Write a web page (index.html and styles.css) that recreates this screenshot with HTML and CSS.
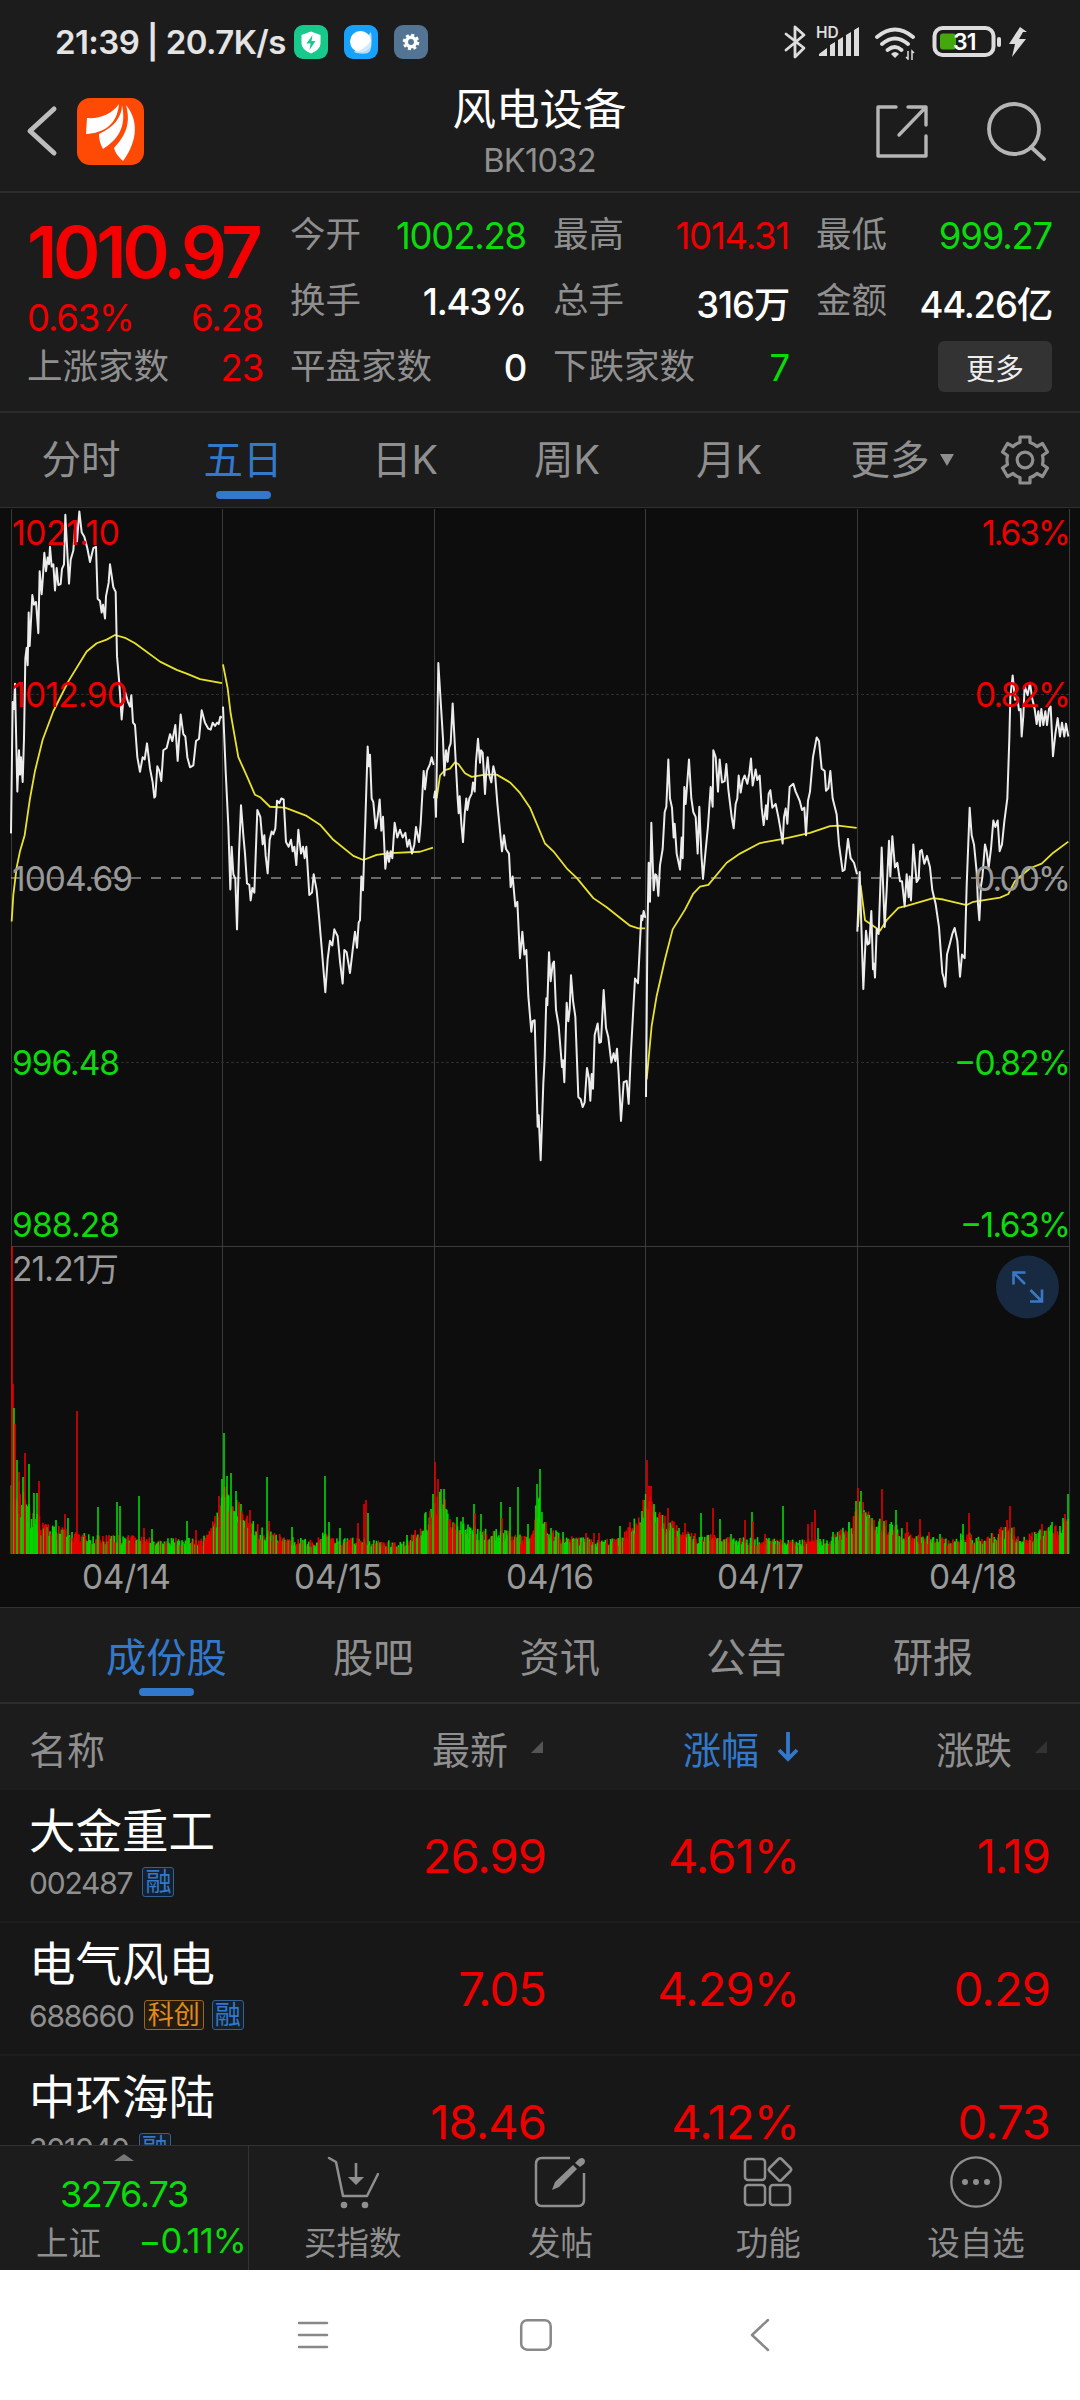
FILE: index.html
```html
<!DOCTYPE html>
<html lang="zh-CN">
<head>
<meta charset="utf-8">
<title>风电设备 BK1032</title>
<link rel="stylesheet" href="styles.css">
</head>
<body>
<div class="phone">

<!-- Status bar -->
<div class="status">
<span class="status-text">21:39 | 20.7K/s</span>
<div class="status-apps">
<svg width="34" height="34" viewBox="0 0 34 34"><rect width="34" height="34" rx="9" fill="#17c98a"/><path d="M17 6.500l9.500 3.500v8c0 5-4 8-9.500 10.500c-5.500-2.500-9.500-5.500-9.500-10.500v-8z" fill="#fff"/><path d="M18.500 10l-6 8.500h4l-1 6.500l6-9h-4z" fill="#17c98a"/></svg>
<svg width="34" height="34" viewBox="0 0 34 34"><rect width="34" height="34" rx="9" fill="#16a2fb"/><path d="M27 7c1 6 1 15-1 19s-12 3-16 1z" fill="#b5dcf9"/><circle cx="16.500" cy="16.500" r="10.500" fill="#fff"/><path d="M27 15c-3 6-8 9-14 11.500c7 2 14-3 14-11.500z" fill="#d3e8fa"/></svg>
<svg width="34" height="34" viewBox="0 0 34 34"><rect width="34" height="34" rx="9" fill="#547493"/><circle cx="17" cy="17" r="4.700" fill="none" stroke="#fff" stroke-width="3.600"/><circle cx="17" cy="17" r="7" fill="none" stroke="#fff" stroke-width="2.600" stroke-dasharray="3 2.500"/></svg>
</div>
<div class="status-right">
<svg width="244" height="36" viewBox="0 0 244 36">
<path d="M2 10l18 14-9 9V3l9 8L2 26" fill="none" stroke="#ddd" stroke-width="2.800" stroke-linejoin="round" stroke-linecap="round"/>
<text x="32" y="14" class="hd">HD</text>
<g fill="#ddd"><path d="M35 32v-2l8-6v8zM46 32V21l5-3v14zM54 32V16l5-3v19zM62 32V11l5-3v24zM70 32V6l5-3v29z"/></g>
<g fill="none" stroke="#ddd" stroke-width="3.800" stroke-linecap="round"><path d="M93 13q18-15 36 0M98 20q13-11 26 0M103.500 26q7.500-6 14 0"/></g>
<path d="M107 30q4-4 8 0l-4 4z" fill="#ddd"/>
<path d="M124 27v8l-2-2M128 36v-9l2 2" fill="none" stroke="#ddd" stroke-width="1.500"/>
<rect x="150.500" y="4" width="59" height="27" rx="8" fill="none" stroke="#ddd" stroke-width="4"/>
<rect x="156" y="9.500" width="16" height="16" rx="3" fill="#44a80c"/>
<rect x="213" y="13" width="4" height="10" rx="2" fill="#ddd"/>
<text x="169" y="26" class="battery">31</text>
<path d="M236 3l-11 17h6l-3 13 14-18h-7l4-7h4z" fill="#ddd"/>
</svg>
</div>
</div>

<!-- Title bar -->
<div class="titlebar">
<svg class="back" width="32" height="52" viewBox="0 0 32 52"><path d="M28 4L4 26l24 22" fill="none" stroke="#bdbdbd" stroke-width="5" stroke-linecap="round" stroke-linejoin="round"/></svg>
<svg class="logo" width="67" height="67" viewBox="0 0 67 67"><rect width="67" height="67" rx="13" fill="#ff4a06"/><g fill="#fff"><path d="M42 6C35 16 23 21 10 20L9 36C27 35 40 27 42 6z"/><path d="M45 7c0 12-8 22-23 29c0 5 1 10 4 15c14-9 24-21 19-44z"/><path d="M49 7c5 18 0 30-12 43c1 4 4 9 9 13c12-16 18-38 3-56z"/></g></svg>
<div class="title">
<div class="title-name">风电设备</div>
<div class="title-code">BK1032</div>
</div>
<div class="title-icons">
<svg width="56" height="56" viewBox="0 0 56 56"><g fill="none" stroke="#b5b5b5" stroke-width="3.400" stroke-linecap="round" stroke-linejoin="round"><path d="M22 4H4v49h48V33M34 4h18v18M52 4L25 32"/></g></svg>
<svg width="60" height="60" viewBox="0 0 60 60"><g fill="none" stroke="#b5b5b5" stroke-width="3.800" stroke-linecap="round"><circle cx="27" cy="28" r="25"/><path d="M44 46l13 12"/></g></svg>
</div>
</div>

<!-- Quote -->
<div class="quote">
<div class="quote-main">
<div class="price up">1010.97</div>
<div class="cell change up"><span>0.63%</span><span>6.28</span></div>
<div class="cell"><label>上涨家数</label><span class="up">23</span></div>
</div>
<div class="quote-col">
<div class="cell"><label>今开</label><span class="down">1002.28</span></div>
<div class="cell"><label>换手</label><b>1.43%</b></div>
<div class="cell"><label>平盘家数</label><b>0</b></div>
</div>
<div class="quote-col">
<div class="cell"><label>最高</label><span class="up">1014.31</span></div>
<div class="cell"><label>总手</label><b>316万</b></div>
<div class="cell"><label>下跌家数</label><span class="down">7</span></div>
</div>
<div class="quote-col">
<div class="cell"><label>最低</label><span class="down">999.27</span></div>
<div class="cell"><label>金额</label><b>44.26亿</b></div>
<div class="cell cell-end"><button class="more-btn">更多</button></div>
</div>
</div>

<!-- Period tabs -->
<div class="periods">
<span class="period">分时</span>
<span class="period active">五日</span>
<span class="period">日K</span>
<span class="period">周K</span>
<span class="period">月K</span>
<span class="period period-more">更多<i class="caret"></i></span>
<svg class="gear" width="50" height="50" viewBox="0 0 50 50"><g fill="none" stroke="#8f8f8f" stroke-width="3.200" stroke-linejoin="round"><path d="M20 2h10v5.500q4 1.200 7 4l5.500-3 5 8.500-5 3.500q1 4.500 0 9l5 3.500-5 8.500-5.500-3q-3 3-7 4V48H20v-5.500q-4-1-7-4l-5.500 3-5-8.500 5-3.500q-1-4.500 0-9l-5-3.500 5-8.500 5.500 3q3-3 7-4z"/><circle cx="25" cy="25" r="7.800"/></g></svg>
</div>

<!-- Five day chart -->
<div class="chart">
<svg width="1080" height="1099" viewBox="0 0 1080 1099">
<g class="grid">
<path d="M11.500 1V1046M222.500 1V1046M434.500 1V1046M645.500 1V1046M857.500 1V1046M1069.500 1V1046M11 738.500H1070"/>
<path class="dots" d="M11 186.500H1070M11 554.500H1070"/>
<path class="zero" d="M11 370H1070"/>
</g>
<g id="volume"></g>
<g class="line avg">
<g transform="translate(0 -8) scale(.33333 .4592)">
<polyline points="35,918 40,860 50,800 60,765 74,730 90,650 105,590 128,522 160,460 205,395 260,330 290,312 320,304 345,294 375,300 405,312 480,352 530,370 560,378 600,390 666,399"/>
<polyline points="669,358 683,410 692,465 715,560 740,600 765,642 782,648 810,668 855,670 920,688 960,707 1000,740 1060,775 1090,784 1130,773 1170,769 1260,766 1299,757"/>
</g>
<g transform="translate(430 -8) scale(.33333 .4592)">
<polyline points="20,650 30,600 45,588 60,585 75,571 85,575 105,595 125,603 165,598 200,598 240,615 270,638 300,670 345,748 370,765 410,802 440,823 490,867 530,887 600,927 625,933 645,933"/>
<polyline points="650,1262 665,1145 680,1080 705,1000 728,935 765,892 790,857 810,842 835,838 890,790 930,770 990,747 1060,738 1140,725 1200,710 1225,709 1280,714"/>
</g>
<g transform="translate(700 -8) scale(.33333 .4592)">
<polyline points="474,930 482,840 495,915 515,925 540,938 560,915 595,888 620,884 700,867 730,870 800,882 820,875 900,866 925,858 945,830 990,802 1025,792 1060,768 1105,744"/>
</g>
</g>
<g class="line now">
<g transform="translate(0 -8) scale(.33333 .4592)">
<polyline points="33,726 38,440 42,455 45,400 52,635 57,545 60,598 63,560 68,614 72,520 76,345 80,322 83,360 86,245 89,318 97,207 102,228 108,222 115,290 119,155 125,205 129,165 133,115 138,155 143,125 147,140 150,102 155,145 160,140 165,197 170,148 175,185 182,183 186,150 192,140 196,32 207,182 212,130 220,110 226,50 231,90 238,25 245,70 253,80 262,105 270,135 280,105 288,102 293,215 300,220 305,245 309,228 315,258 318,210 326,180 330,140 340,190 347,200 351,340 358,400 365,478 370,435 376,420 384,440 390,450 394,425 399,485 405,490 412,560 420,592 428,560 434,565 441,530 450,585 458,615 463,648 466,645 472,580 478,590 484,612 490,545 500,540 510,510 517,525 526,490 533,568 542,467 550,510 556,515 562,560 570,582 580,578 588,525 597,520 605,458 615,485 625,498 632,500 638,485 645,492 651,485 656,488 661,472 666,474"/>
<polyline points="669,450 677,590 685,710 691,848 695,755 700,815 706,825 711,935 717,770 723,665 730,730 735,770 741,835 748,838 752,872 757,845 763,855 772,675 781,690 788,750 793,730 797,775 803,813 809,740 815,722 820,728 826,715 831,655 838,660 844,650 851,652 858,745 866,755 873,740 878,765 883,755 889,795 895,718 903,770 909,755 914,780 919,755 928,860 936,855 941,815 950,850 958,915 965,975 976,1072 983,1000 990,960 997,970 1003,935 1013,950 1020,1005 1028,1053 1033,980 1040,985 1050,1030 1058,980 1065,940 1071,975 1076,920 1080,915 1084,820 1089,850 1096,700 1103,537 1107,580 1110,555 1115,650 1120,658 1127,715 1133,690 1139,652 1144,720 1149,690 1156,803 1162,765 1167,788 1172,765 1177,780 1184,703 1192,735 1200,718 1208,735 1216,725 1222,755 1228,740 1236,770 1243,750 1248,712 1257,745 1262,705 1271,590 1275,630 1281,590 1290,575 1295,560 1301,577"/>
</g>
<g transform="translate(430 -8) scale(.33333 .4592)">
<polyline points="12,650 15,635 18,690 25,355 33,450 39,520 43,600 48,545 53,570 57,540 62,530 68,443 75,540 83,650 86,682 89,645 94,705 99,745 104,685 109,650 112,675 118,650 125,640 129,615 134,635 138,570 144,520 150,572 153,545 158,550 165,640 169,590 173,560 178,600 184,615 190,580 195,595 202,660 208,705 216,765 222,730 228,760 237,770 242,843 248,820 256,885 262,875 270,998 277,940 283,990 289,980 295,1080 304,1158 308,1135 314,1133 323,1365 326,1340 332,1438 340,1270 344,1215 349,1085 352,1100 357,985 362,1048 368,1010 372,1005 378,1110 386,1145 396,1235 399,1220 403,1268 410,1095 415,1135 419,1110 423,1035 429,1090 436,1125 445,1300 452,1305 458,1322 464,1312 471,1237 477,1260 481,1308 485,1250 489,1282 494,1165 503,1140 508,1182 513,1180 521,1067 528,1150 535,1170 544,1225 551,1205 556,1222 561,1195 566,1250 573,1352 581,1268 590,1265 596,1315 603,1200 615,1042 624,1052 634,905 637,915 641,895 646,910"/>
<polyline points="648,1300 652,960 656,790 660,875 664,703 671,850 676,815 680,818 685,862 690,795 698,760 704,680 709,668 715,565 720,650 726,670 731,735 734,705 740,770 750,805 755,735 758,780 763,625 767,662 777,565 784,650 790,680 797,690 803,770 808,668 814,770 819,825 826,770 834,710 842,625 848,668 850,545 857,560 864,635 869,565 876,615 884,612 889,575 895,630 900,660 905,690 911,715 917,662 922,650 926,600 932,637 938,610 944,600 952,618 958,595 963,563 968,622 977,587 982,610 989,600 995,670 1001,708 1008,665 1011,695 1016,640 1021,632 1027,670 1037,662 1045,690 1051,715 1058,748 1062,690 1067,672 1072,705 1079,625 1090,618 1097,635 1103,645 1109,655 1116,675 1123,670 1128,730 1134,655 1140,635 1149,560 1160,517 1167,525 1175,585 1184,590 1188,633 1195,628 1201,590 1208,650 1220,685 1227,750 1238,808 1244,805 1254,738 1262,780 1272,790 1281,815"/>
</g>
<g transform="translate(700 -8) scale(.33333 .4592)">
<polyline points="472,940 479,810 490,1065 498,938 503,968 508,965 514,895 519,1022 522,1010 525,1040 530,935 536,945 545,757 554,930 560,850 567,742 571,820 577,732 585,800 592,790 600,830 606,830 614,885 620,815 626,865 629,820 633,872 640,750 650,832 656,825 660,765 665,762 673,792 681,775 690,800 697,850 707,880 717,930 727,1030 731,1040 736,1060 741,990 750,965 757,945 764,932 772,960 780,1038 786,990 794,998 800,840 809,670 815,730 822,750 830,810 834,880 838,915 843,840 847,822 855,750 860,765 866,800 873,760 880,698 886,712 893,698 899,765 906,750 913,700 922,650 928,520 931,430 938,382 945,435 952,430 957,458 962,455 965,515 970,470 974,405 983,425 990,398 996,430 1004,455 1010,488 1015,460 1020,492 1024,455 1030,490 1036,460 1041,490 1047,455 1052,450 1059,558 1066,510 1073,475 1080,515 1086,485 1093,515 1098,487 1105,515"/>
</g>
</g>
<g class="axis">
<text class="up" x="12" y="37" textLength="108">1021.10</text>
<text class="up" x="12" y="199" textLength="116">1012.90</text>
<text x="12" y="383" textLength="121">1004.69</text>
<text class="down" x="12" y="567" textLength="108">996.48</text>
<text class="down" x="12" y="729" textLength="108">988.28</text>
<text x="12" y="773" textLength="107">21.21万</text>
<text class="up" x="982" y="37" textLength="89">1.63%</text>
<text class="up" x="975" y="199" textLength="96">0.82%</text>
<text x="974" y="383" textLength="97">0.00%</text>
<text class="down" x="954" y="567" textLength="117">−0.82%</text>
<text class="down" x="960" y="729" textLength="111">−1.63%</text>
<text x="82" y="1081" textLength="89">04/14</text>
<text x="294" y="1081" textLength="88">04/15</text>
<text x="506" y="1081" textLength="88">04/16</text>
<text x="717" y="1081" textLength="87">04/17</text>
<text x="929" y="1081" textLength="88">04/18</text>
</g>
<circle cx="1027.500" cy="779" r="31.500" fill="#172a42"/>
<path d="M1013.500 777v-12h12M1014 765.500l11 11M1042 782v12h-12M1041.500 793.500l-11-11" transform="translate(0 -.5)" fill="none" stroke="#3a78c6" stroke-width="2.600"/>
</svg>
</div>

<!-- Section tabs -->
<div class="sections">
<span class="section active">成份股</span>
<span class="section">股吧</span>
<span class="section">资讯</span>
<span class="section">公告</span>
<span class="section">研报</span>
</div>

<!-- Stock list -->
<div class="list">
<div class="list-head">
<span>名称</span>
<span class="sort">最新<i class="tri"></i></span>
<span class="sort sorted">涨幅<svg width="22" height="32" viewBox="0 0 22 32"><path d="M11 1v27M2 19l9 9 9-9" fill="none" stroke="#3279cd" stroke-width="3.800"/></svg></span>
<span class="sort">涨跌<i class="tri dim"></i></span>
</div>
<div class="stock">
<div><div class="stock-name">大金重工</div><div class="stock-code">002487<em>融</em></div></div>
<span>26.99</span><span>4.61%</span><span>1.19</span>
</div>
<div class="stock">
<div><div class="stock-name">电气风电</div><div class="stock-code">688660<em class="kc">科创</em><em>融</em></div></div>
<span>7.05</span><span>4.29%</span><span>0.29</span>
</div>
<div class="stock">
<div><div class="stock-name">中环海陆</div><div class="stock-code">301040<em>融</em></div></div>
<span>18.46</span><span>4.12%</span><span>0.73</span>
</div>
</div>

<!-- Bottom bar -->
<div class="bottom">
<div class="index">
<i class="up-caret"></i>
<div class="index-value">3276.73</div>
<div class="index-row"><span>上证</span><span class="down">−0.11%</span></div>
</div>
<div class="action">
<svg width="52" height="54" viewBox="0 0 52 54"><path d="M2 3l7 4 7 34h24l11-22" fill="none" stroke="#8f8f8f" stroke-width="2.500" stroke-linecap="round" stroke-linejoin="round"/><path d="M29 8v16" stroke="#8f8f8f" stroke-width="2.600"/><path d="M21 22h16l-8 8z" fill="#8f8f8f"/><circle cx="17" cy="50" r="3.300" fill="#8f8f8f"/><circle cx="38" cy="50" r="3.300" fill="#8f8f8f"/></svg>
<span>买指数</span>
</div>
<div class="action">
<svg width="52" height="54" viewBox="0 0 52 54"><path d="M36 3H8q-6 0-6 6v36q0 6 6 6h36q6 0 6-6V18" fill="none" stroke="#8f8f8f" stroke-width="2.500"/><path d="M18 35l3-8 18-17 4 4-18 18zM41 8l4-4q3-2 5 0t0 5l-4 3z" fill="#8f8f8f"/></svg>
<span>发帖</span>
</div>
<div class="action">
<svg width="52" height="54" viewBox="0 0 52 54"><g fill="none" stroke="#8f8f8f" stroke-width="2.500" stroke-linejoin="round"><rect x="3" y="4" width="20" height="21" rx="3"/><rect x="3" y="30" width="20" height="20" rx="3"/><rect x="28" y="30" width="20" height="20" rx="3"/><path d="M36.500 4q1.500-1.500 3 0l9 9q1.500 1.500 0 3l-9 9q-1.500 1.500-3 0l-9-9q-1.500-1.500 0-3z"/></g></svg>
<span>功能</span>
</div>
<div class="action">
<svg width="52" height="54" viewBox="0 0 52 54"><circle cx="26" cy="27" r="24.700" fill="none" stroke="#8f8f8f" stroke-width="2.300"/><g fill="#8f8f8f"><circle cx="15" cy="27" r="3"/><circle cx="26" cy="27" r="3"/><circle cx="37" cy="27" r="3"/></g></svg>
<span>设自选</span>
</div>
</div>

<!-- System navigation -->
<div class="nav">
<svg width="34" height="34" viewBox="0 0 34 34"><path d="M3 5h28M3 17h28M3 29h28" stroke="#888" stroke-width="2.500" stroke-linecap="round"/></svg>
<svg width="34" height="34" viewBox="0 0 34 34"><rect x="2.200" y="2.200" width="29.500" height="29.500" rx="6" fill="none" stroke="#888" stroke-width="2.500"/></svg>
<svg width="34" height="34" viewBox="0 0 34 34"><path d="M26 2L10 17l16 15" fill="none" stroke="#888" stroke-width="2.500" stroke-linecap="round" stroke-linejoin="round"/></svg>
</div>

</div>
<script src="script.js"></script>
</body>
</html>
```
FILE: styles.css
```css
* { box-sizing: border-box; }
body { margin: 0; background: #1c1c1c; font-family: Inter, "Noto Sans CJK SC", sans-serif; color: #8f8f8f; }
svg { display: block; flex-shrink: 0; }
.phone { width: 1080px; height: 2400px; display: flex; flex-direction: column; overflow: hidden; }
.up { color: #ec0000; fill: #ec0000; }
.down { color: #0cda0c; fill: #0cda0c; }

/* status bar */
.status { height: 84px; display: flex; align-items: center; padding: 0 52px 0 55px; }
.status-text { width: 239px; font-size: 33px; font-weight: 600; color: #e4e4e4; letter-spacing: -0.6px; white-space: nowrap; }
.status-apps { display: flex; gap: 16px; }
.status-right { margin-left: auto; }
.hd { font-size: 15.5px; font-weight: 600; fill: #ddd; }
.battery { font-size: 23px; font-weight: 600; fill: #fff; letter-spacing: -1px; }

/* title */
.titlebar { height: 109px; display: flex; align-items: center; padding: 0 33px 13px 26px; border-bottom: 2px solid #2c2c2c; }
.logo { margin-left: 19px; }
.title { flex: 1; text-align: center; padding: 6px 0 0 61px; }
.title-name { font-size: 43.5px; line-height: 54px; color: #fff; }
.title-code { font-size: 32.5px; line-height: 50px; letter-spacing: -0.7px; }
.title-icons { display: flex; align-items: center; gap: 57px; }

/* quote */
.quote { height: 220px; padding: 10px 28px 0 27px; display: grid; grid-template-columns: repeat(4, minmax(0, 1fr)); gap: 27px; border-bottom: 2px solid #2c2c2c; }
.cell { height: 66px; display: flex; align-items: center; justify-content: space-between; font-size: 36.5px; letter-spacing: -1.2px; white-space: nowrap; }
.cell label { font-size: 35.5px; line-height: 50px; letter-spacing: 0; margin-top: -3px; }
.cell b { font-weight: 500; color: #fff; }
.price { height: 98px; line-height: 98px; font-size: 72px; font-weight: 600; letter-spacing: -4.4px; color: #f50000; }
.change { height: 34px; }
.cell-end { justify-content: flex-end; }
.more-btn { width: 114px; height: 51px; margin-top: -3px; border: 0; border-radius: 6px; padding: 0; background: #333; color: #eee; font: 29px "Noto Sans CJK SC", sans-serif; }

/* period tabs */
.periods { height: 95px; display: flex; align-items: center; border-bottom: 1px solid #303030; }
.period { position: relative; width: 162px; text-align: center; font-size: 39.5px; line-height: 97px; }
.period.active, .section.active { color: #3279cd; }
.period.active::after, .section.active::after { content: ""; position: absolute; left: 50%; bottom: 10px; width: 55px; height: 8px; margin-left: -27px; border-radius: 4px; background: #3279cd; }
.period-more { width: 190px; display: flex; align-items: center; justify-content: center; gap: 10px; padding-right: 6px; }
.caret { border: 7px solid transparent; border-top: 12px solid #8f8f8f; border-bottom: 0; }

/* chart */
.chart { height: 1100px; background: #0d0d0d; border-bottom: 1px solid #303030; }
.grid { fill: none; stroke: #3b3b3b; stroke-width: 1; }
.dots { stroke: #2c2c2c; stroke-dasharray: 3 2; }
.zero { stroke: #8a8a8a; stroke-width: 1.5; stroke-dasharray: 10 10; }
.line { fill: none; stroke-linejoin: round; }
.line polyline { vector-effect: non-scaling-stroke; }
.avg { stroke: #e9e22b; stroke-width: 1.8; }
.now { stroke: #ececec; stroke-width: 2; }
.axis { font-size: 33.5px; fill: #999; }

/* section tabs */
.sections { height: 96px; display: flex; gap: 106px; padding-left: 106px; border-bottom: 2px solid #2c2c2c; }
.section { position: relative; font-size: 40.3px; line-height: 99px; }
.section.active::after { bottom: 6px; }

/* list */
.list { flex: none; height: 441px; overflow: hidden; background: #171717; }
.list-head, .stock { display: grid; grid-template-columns: 293px 224px 253px 251px; padding-left: 29px; align-items: center; }
.list-head { height: 86px; font-size: 38px; background: #1c1c1c; }
.sort { display: flex; align-items: center; justify-content: flex-end; }
.list-head .sort { padding-right: 3px; }
.list-head .sorted { padding-right: 0; }
.tri { margin-left: 23px; border: 6px solid transparent; border-right-color: #555; border-bottom-color: #555; }
.tri.dim { border-right-color: #333; border-bottom-color: #333; }
.sorted { color: #3279cd; }
.sorted svg { margin-left: 18px; }
.stock { height: 133px; border-bottom: 2px solid #1d1d1d; color: #ec0000; font-size: 47px; letter-spacing: -0.9px; }
.stock > span { text-align: right; }
.stock-name { font-size: 46.5px; line-height: 58px; color: #fff; letter-spacing: 0; margin-top: -3px; }
.stock-code { display: flex; align-items: center; height: 46px; font-size: 30px; letter-spacing: -1.2px; color: #8f8f8f; }
.stock-code em { margin: -3px 0 0 10px; padding: 0 2px; border: 1px solid #336093; border-radius: 3px; font-style: normal; font-size: 26px; line-height: 28px; letter-spacing: 0; color: #3279cd; background: #16202c; }
.stock-code .kc { color: #e08b1c; border-color: #98681f; background: #241c10; padding: 0 3px; }
.stock-code .kc + em { margin-left: 8px; }

/* bottom bar */
.bottom { height: 125px; display: flex; border-top: 1px solid #333; background: #1c1c1c; }
.index { width: 249px; border-right: 1px solid #333; }
.up-caret { display: block; width: 20px; margin: 8px auto 0; border: 10px solid transparent; border-bottom: 7px solid #777; border-top: 0; }
.index-value { text-align: center; font-size: 36px; line-height: 52px; margin-top: 7px; letter-spacing: -1.3px; color: #0cda0c; }
.index-row { display: flex; justify-content: space-between; align-items: center; height: 40px; padding: 0 2px 0 36px; font-size: 32.5px; }
.index-row .down { font-size: 34.5px; letter-spacing: -0.9px; }
.action { width: 208px; display: flex; flex-direction: column; align-items: center; padding-top: 9px; font-size: 32.5px; line-height: 48px; gap: 11px; }

/* system navigation */
.nav { flex: 1; background: #fff; display: flex; justify-content: center; gap: 189px; padding: 48px 8px 0 0; }
```
FILE: script.js
```js
// volume bars: outline of the ordinary minutes, then the peaks
const outline = [
  [11, 60], [20, 60], [30, 42], [42, 28], [60, 22], [80, 17], [130, 15], [200, 13], [208, 20], [218, 37], [222, 60],
  [230, 64], [240, 42], [260, 22], [290, 14], [315, 11], [322, 24], [330, 13], [350, 14], [400, 10], [412, 17], [430, 42],
  [440, 60], [450, 30], [470, 23], [500, 20], [530, 14], [537, 50], [545, 28], [560, 16], [600, 12], [620, 14], [632, 27],
  [645, 52], [652, 50], [660, 33], [670, 28], [690, 17], [740, 14], [800, 12], [830, 14], [850, 29], [860, 50], [870, 30],
  [890, 27], [910, 18], [950, 12], [965, 20], [985, 13], [1005, 26], [1020, 14], [1040, 20], [1058, 26], [1069, 34]
];
const peaks = '12:308r 13:170r 14:146g 15:130r 17:94g 19:82r 23:77g 25:101r 29:90g 34:61g 37:61g 39:73r 56:34g 65:40r 68:36g ' +
  '77:143r 98:47g 117:52g 120:48g 139:58g 144:26r 152:25g 187:33g 196:24r 215:38r 219:58r 222:75g 224:121g 227:78g 231:81g ' +
  '236:63g 239:52r 250:44r 267:77g 269:33r 292:27g 325:78g 329:32g 340:26g 358:31r 364:50r 366:54r 368:41g 407:19g 430:43r ' +
  '433:60g 435:92r 438:75r 441:65g 444:65g 450:35r 457:37g 463:37g 474:50g 475:41r 481:40g 501:52g 502:36r 510:47g 518:67g ' +
  '528:30g 537:70g 540:85g 546:32r 551:26g 563:22g 586:21r 594:21r 599:21r 620:28g 630:32r 642:43g 645:54g 647:94r 649:68r ' +
  '651:68r 654:50g 661:39r 665:38r 668:46r 673:26g 679:26g 685:31r 701:41g 713:46r 720:35g 731:20g 745:34r 752:42g 753:33r ' +
  '765:20r 783:48g 808:30r 812:32r 815:44r 818:26g 833:22g 849:32g 854:38r 856:53g 858:66r 861:63g 864:42r 872:36g 874:34r ' +
  '882:65r 884:33g 890:30g 896:44g 907:32r 920:35r 929:22r 940:20g 963:30g 969:41r 1001:27r 1007:34r 1010:48r 1014:27r ' +
  '1036:20g 1042:30r 1052:32g 1060:28g 1063:36g 1065:40r 1068:60g';

const base = 1046;
let seed = 14;
function rnd() {
  seed = (seed * 16807) % 2147483647;
  return seed / 2147483647;
}
function height(x) {
  let i = 1;
  while (i < outline.length - 1 && outline[i][0] < x) i++;
  const [x0, h0] = outline[i - 1];
  const [x1, h1] = outline[i];
  return h0 + (h1 - h0) * (x - x0) / (x1 - x0);
}
function bar(x, h, up) {
  return `<rect x="${x.toFixed(2)}" y="${(base - h).toFixed(1)}" width="1.6" height="${h.toFixed(1)}" fill="${up ? '#e60000' : '#00d800'}"/>`;
}

let bars = '';
let up = true;
for (let x = 10.5; x < 1068; x += 0.88) {
  if (rnd() < 0.42) up = !up;
  bars += bar(x, height(x) * (0.6 + rnd() * 0.65), up);
}
peaks.split(' ').forEach(p => {
  const [x, h] = p.split(':');
  bars += bar(+x - 0.8, parseInt(h), h.endsWith('r'));
});
document.getElementById('volume').innerHTML = bars;
```
